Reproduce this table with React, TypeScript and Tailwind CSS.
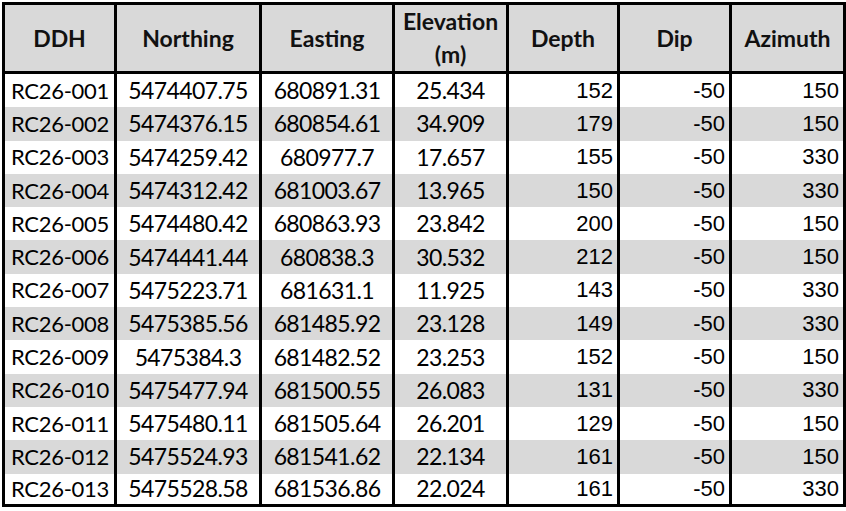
const rows: [string, string, string, string, number, number, number][] = [
  ["RC26-001", "5474407.75", "680891.31", "25.434", 152, -50, 150],
  ["RC26-002", "5474376.15", "680854.61", "34.909", 179, -50, 150],
  ["RC26-003", "5474259.42", "680977.7", "17.657", 155, -50, 330],
  ["RC26-004", "5474312.42", "681003.67", "13.965", 150, -50, 330],
  ["RC26-005", "5474480.42", "680863.93", "23.842", 200, -50, 150],
  ["RC26-006", "5474441.44", "680838.3", "30.532", 212, -50, 150],
  ["RC26-007", "5475223.71", "681631.1", "11.925", 143, -50, 330],
  ["RC26-008", "5475385.56", "681485.92", "23.128", 149, -50, 330],
  ["RC26-009", "5475384.3", "681482.52", "23.253", 152, -50, 150],
  ["RC26-010", "5475477.94", "681500.55", "26.083", 131, -50, 330],
  ["RC26-011", "5475480.11", "681505.64", "26.201", 129, -50, 150],
  ["RC26-012", "5475524.93", "681541.62", "22.134", 161, -50, 150],
  ["RC26-013", "5475528.58", "681536.86", "22.024", 161, -50, 330],
];

const widths = ["w-[112px]", "w-[145px]", "w-[133px]", "w-[114px]", "w-[111px]", "w-[112px]", "w-[114px]"];

// Calibri stand-in: Lato, tightened to match Calibri's narrower digits
const calibri = "font-['Lato',sans-serif] text-[23px] tracking-[-0.6px]";
const arial = "font-['Liberation_Sans',Arial,sans-serif] text-[22px]";

export default function App() {
  return (
    <div className="w-[846px] h-[511px] overflow-hidden bg-white pt-[2px] pl-[2px]">
      <table className="border-separate border-spacing-0 border-l-[3px] border-t-[3px] border-black table-fixed w-[844px] text-black">
        <thead>
          <tr className="h-[67px] bg-[#d9d9d9]">
            {["DDH", "Northing", "Easting", "Elevation (m)", "Depth", "Dip", "Azimuth"].map((h, i) => (
              <th
                key={h}
                className={`${widths[i]} p-0 border-r-[3px] border-b-[3px] border-black font-['Lato',sans-serif] font-bold text-[23px] leading-[33px] text-[#111] text-center align-middle whitespace-nowrap`}
              >
                {h === "Elevation (m)" ? (
                  <>
                    Elevation
                    <br />
                    (m)
                  </>
                ) : (
                  h
                )}
              </th>
            ))}
          </tr>
        </thead>
        <tbody>
          {rows.map((r, idx) => {
            const last = idx === rows.length - 1;
            const bb = last ? "border-b-[3px]" : "";
            return (
              <tr key={r[0]} className={`h-[33.3px] ${idx % 2 === 1 ? "bg-[#d9d9d9]" : "bg-white"}`}>
                <td className={`p-0 pl-[6px] border-r-[3px] border-black ${bb} font-['Lato',sans-serif] text-[22px] tracking-[-0.3px] leading-none text-left whitespace-nowrap`}>{r[0]}</td>
                <td className={`p-0 border-r-[3px] border-black ${bb} ${calibri} leading-none text-center whitespace-nowrap`}>{r[1]}</td>
                <td className={`p-0 border-r-[3px] border-black ${bb} ${calibri} leading-none text-center whitespace-nowrap`}>{r[2]}</td>
                <td className={`p-0 border-r-[3px] border-black ${bb} ${calibri} leading-none text-center whitespace-nowrap`}>{r[3]}</td>
                <td className={`p-0 pr-[4px] border-r-[3px] border-black ${bb} ${arial} leading-none text-right`}>{r[4]}</td>
                <td className={`p-0 pr-[4px] border-r-[3px] border-black ${bb} ${arial} leading-none text-right`}>{r[5]}</td>
                <td className={`p-0 pr-[4px] border-r-[3px] border-black ${bb} ${arial} leading-none text-right`}>{r[6]}</td>
              </tr>
            );
          })}
        </tbody>
      </table>
    </div>
  );
}
